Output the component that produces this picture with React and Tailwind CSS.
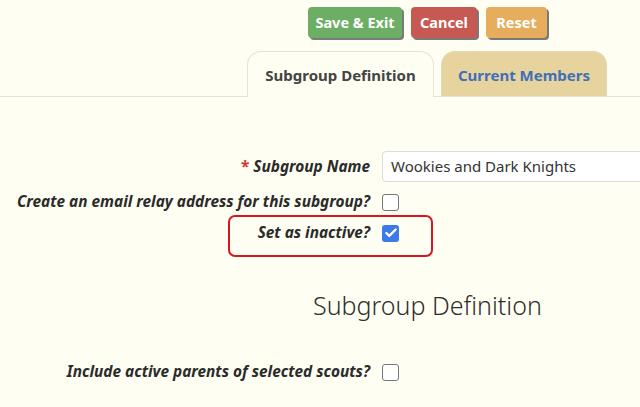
import { Check } from "lucide-react";

const font = { fontFamily: '"Noto Sans", "Open Sans", sans-serif' };

function Checkbox({ checked }) {
  return checked ? (
    <span className="flex h-[17px] w-[17px] items-center justify-center rounded-[3px] bg-[#3b7ae8]">
      <Check className="h-[14px] w-[14px] text-white" strokeWidth={4} />
    </span>
  ) : (
    <span className="block h-[17px] w-[17px] rounded-[3px] border border-[#767676] bg-white" />
  );
}

function Label({ children }) {
  return (
    <span className="text-right text-[15.4px] font-bold italic leading-5 text-[#2b2b2b]">
      {children}
    </span>
  );
}

export default function App() {
  return (
    <div className="h-[407px] w-[640px] overflow-hidden bg-[#fefef2]" style={font}>
      {/* action buttons */}
      <div className="flex gap-[9px] pl-[308px] pt-[7px]">
        <button className="h-[31px] w-[94px] rounded-[4px] bg-[#6caf64] text-[14.5px] font-bold text-white shadow-[2px_2px_0_#7a7a7a]">
          Save &amp; Exit
        </button>
        <button className="h-[31px] w-[66px] rounded-[4px] bg-[#c65a52] text-[14.5px] font-bold text-white shadow-[2px_2px_0_#7a7a7a]">
          Cancel
        </button>
        <button className="h-[31px] w-[61px] rounded-[4px] bg-[#e6ad5c] text-[14.5px] font-bold text-white shadow-[2px_2px_0_#7a7a7a]">
          Reset
        </button>
      </div>

      {/* tabs */}
      <div className="mt-[13px] flex items-end gap-[7px] border-b border-[#e3e3dc] pl-[247px]">
        <div className="-mb-px flex h-[46px] w-[187px] items-center justify-center rounded-t-[14px] border border-b-0 border-[#e3e3dc] bg-[#fefef2] pt-[2px] text-[15px] font-bold text-[#444]">
          Subgroup Definition
        </div>
        <div className="flex h-[45px] w-[166px] items-center justify-center rounded-t-[14px] border border-b-0 border-[#e0d7b8] bg-[#e7d39e] pt-[2px] text-[15px] font-bold text-[#3f70b8]">
          Current Members
        </div>
      </div>

      {/* form */}
      <div className="grid grid-cols-[370px_1fr] items-center gap-x-[12px] pt-[54px]">
        <Label>
          <span className="mr-1 not-italic text-[#d9302b]">*</span>Subgroup Name
        </Label>
        <div className="flex h-[31px] w-[300px] items-center rounded-[4px] border border-[#dcdcdc] bg-white px-[8px] text-[15px] text-[#333]">
          Wookies and Dark Knights
        </div>

        <div className="col-span-2 h-[10px]" />
        <Label>Create an email relay address for this subgroup?</Label>
        <Checkbox />

        <div className="col-span-2 h-[11px]" />
        <div className="relative col-span-2 grid grid-cols-[370px_1fr] items-center gap-x-[12px]">
          <Label>Set as inactive?</Label>
          <Checkbox checked />
          <div className="pointer-events-none absolute left-[228px] top-[-8px] h-[42px] w-[205px] rounded-[7px] border-2 border-[#d9161c]" />
        </div>
      </div>

      <h2 className="mt-[46px] pl-[313px] text-[25px] font-light leading-8 text-[#2e2e2e]">
        Subgroup Definition
      </h2>

      <div className="mt-[41px] grid grid-cols-[370px_1fr] items-center gap-x-[12px]">
        <Label>Include active parents of selected scouts?</Label>
        <Checkbox />
      </div>
    </div>
  );
}
